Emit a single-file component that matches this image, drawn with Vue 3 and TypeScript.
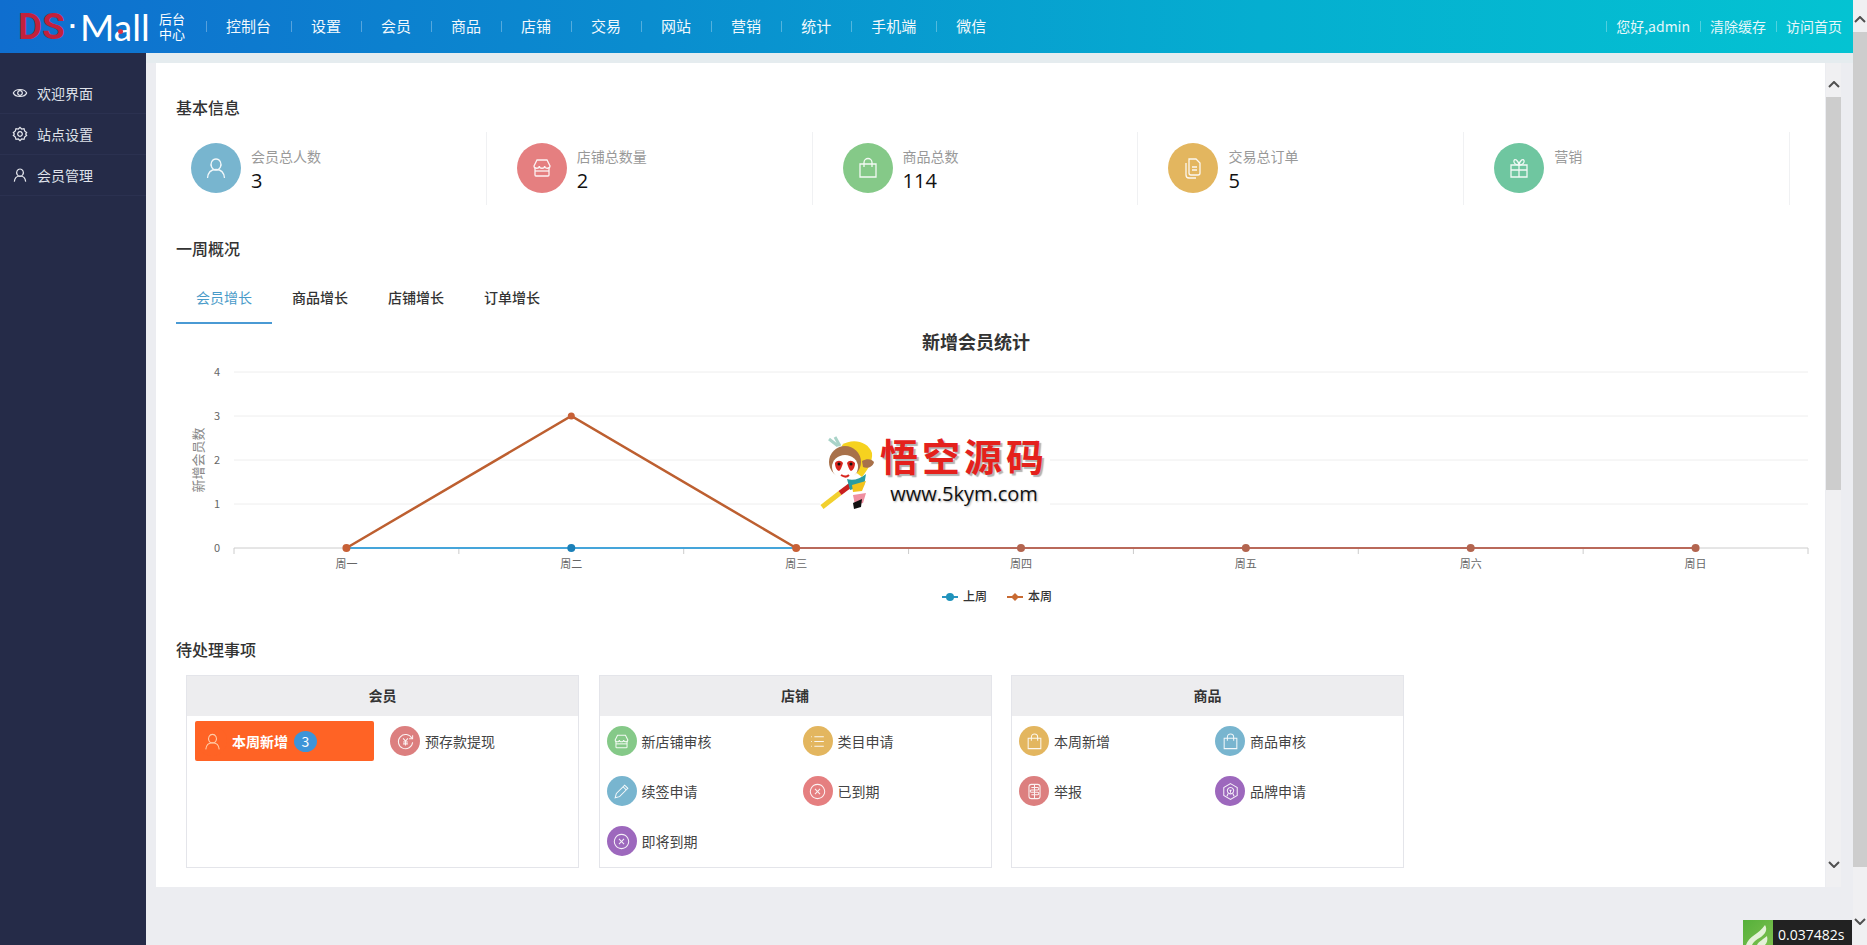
<script setup lang="ts">
interface PendingItem {
  label: string;
  icon: string;
  color: string;
  active?: boolean;
  badge?: number;
}

const icons: Record<string, string[]> = {
  user: ["M12 3a5 5.500 0 1 0 .01 0", "M3.500 22c.5-5.500 4-8.500 8.500-8.500s8 3 8.500 8.500"],
  store: [
    "M5 11v8a1 1 0 0 0 1 1h12a1 1 0 0 0 1-1v-8",
    "M4 10 7 4h10l3 6c0 3-5.300 3-5.300 0 0 3-5.400 3-5.400 0 0 3-5.300 3-5.300 0Z",
    "M5 15h14",
  ],
  bag: ["M4 8h16v13H4Z", "M8 11V6.500a4 4 0 0 1 8 0V11"],
  doc: [
    "M8 3h7l4 4v10a2 2 0 0 1-2 2h-7a2 2 0 0 1-2-2Z",
    "M5 7v12a3 3 0 0 0 3 3h7",
    "M11 11h5M11 14h5",
  ],
  gift: [
    "M4 9h16v12H4Z",
    "M12 9v12M4 14h16",
    "M12 9C9 9 6 7 7 4.500 8 2.500 11 4 12 9c1-5 4-6.500 5-4.500C18 7 15 9 12 9Z",
  ],
  list: ["M8 6h12M8 12h12M8 18h12", "M4 6h1M4 12h1M4 18h1"],
  pencil: ["M4 20l1.500-5.500L16 4l4 4L9.500 18.500Z", "M14 6l4 4"],
  xcircle: ["M12 3a9 9 0 1 0 .01 0", "M8.800 8.800l6.400 6.400M15.200 8.800l-6.400 6.400"],
  refund: [
    "M20 8a9 9 0 1 0 1 5",
    "M21 4v4.500h-4.500",
    "M9 8l3 3.500L15 8M12 11.500V17M9 12.500h6M9 15h6",
  ],
  report: [
    "M8 3h8a3 3 0 0 1 3 3v12a3 3 0 0 1-3 3H8a3 3 0 0 1-3-3V6a3 3 0 0 1 3-3Z",
    "M8 7h8a1.500 1.500 0 0 1 0 3H8a1.500 1.500 0 0 0 0 3h8a1.500 1.500 0 0 1 0 3H8",
    "M12 3v18",
  ],
  brand: [
    "M12 2l8.500 5v10L12 22l-8.500-5V7Z",
    "M12 7a4 4 0 1 0 .01 0",
    "M10.500 10.500h3M12 10.500v3M9 14.500 7.500 18M15 14.500l1.500 3.500",
  ],
  eye: ["M2 12c3-7 17-7 20 0-3 7-17 7-20 0Z", "M12 8.500a3.500 3.500 0 1 0 .01 0"],
  gear: [
    "M12 2l2.500 2.500L18 4l1 3.500 3 2.500-1.500 2 1.500 2-3 2.500-1 3.500-3.500-.5L12 22l-2.500-2.500L6 20l-1-3.500L2 14l1.500-2L2 10l3-2.500L6 4l3.500.5Z",
    "M12 8.500a3.500 3.500 0 1 0 .01 0",
  ],
};

const navItems = ["控制台", "设置", "会员", "商品", "店铺", "交易", "网站", "营销", "统计", "手机端", "微信"];
const topLinks = ["您好,admin", "清除缓存", "访问首页"];

const sideItems = [
  { label: "欢迎界面", icon: "eye" },
  { label: "站点设置", icon: "gear" },
  { label: "会员管理", icon: "user" },
];

const stats = [
  { label: "会员总人数", value: "3", icon: "user", color: "#78b5cf" },
  { label: "店铺总数量", value: "2", icon: "store", color: "#e57f80" },
  { label: "商品总数", value: "114", icon: "bag", color: "#85c988" },
  { label: "交易总订单", value: "5", icon: "doc", color: "#e3b65f" },
  { label: "营销", value: "", icon: "gift", color: "#6fc6a0" },
];

const tabs = ["会员增长", "商品增长", "店铺增长", "订单增长"];

const pending: { title: string; items: PendingItem[] }[] = [
  {
    title: "会员",
    items: [
      { label: "本周新增", icon: "user", color: "#ff6325", active: true, badge: 3 },
      { label: "预存款提现", icon: "refund", color: "#dc7f7f" },
    ],
  },
  {
    title: "店铺",
    items: [
      { label: "新店铺审核", icon: "store", color: "#85c988" },
      { label: "类目申请", icon: "list", color: "#e3b65f" },
      { label: "续签申请", icon: "pencil", color: "#78b5cf" },
      { label: "已到期", icon: "xcircle", color: "#e57f80" },
      { label: "即将到期", icon: "xcircle", color: "#9d68bd" },
    ],
  },
  {
    title: "商品",
    items: [
      { label: "本周新增", icon: "bag", color: "#e3b65f" },
      { label: "商品审核", icon: "bag", color: "#78b5cf" },
      { label: "举报", icon: "report", color: "#dc7f7f" },
      { label: "品牌申请", icon: "brand", color: "#9d68bd" },
    ],
  },
];

// chart geometry, in the svg's own coordinates
const plotLeft = 78;
const plotWidth = 1574;
const plotTop = 47;
const rowHeight = 44;
const bottom = plotTop + rowHeight * 4;
const band = plotWidth / 7;
const days = ["周一", "周二", "周三", "周四", "周五", "周六", "周日"];
const thisWeek = [0, 3, 0, 0, 0, 0, 0];

const xAt = (i: number) => plotLeft + band * i + band / 2;
const yAt = (v: number) => bottom - v * rowHeight;
const ticks = Array.from({ length: 8 }, (_, i) => plotLeft + band * i);
const points = thisWeek.map((v, i) => ({ x: xAt(i), y: yAt(v) }));
const risePath = points.slice(0, 3).map((p) => `${p.x},${p.y}`).join(" ");
</script>

<template>
  <div class="page">
    <div class="main">
      <header class="topbar">
        <div class="logo">
          <span class="logo-ds">DS</span>
          <span class="logo-dot">·</span>
          <span class="logo-mall">Mall<i class="logo-red"></i></span>
          <span class="logo-sub">后台<br />中心</span>
        </div>
        <nav class="nav">
          <a v-for="item in navItems" :key="item" class="nav-item">{{ item }}</a>
        </nav>
        <div class="top-links">
          <a v-for="link in topLinks" :key="link" class="top-link">{{ link }}</a>
        </div>
      </header>

      <div class="body">
        <aside class="sidebar">
          <div v-for="item in sideItems" :key="item.label" class="side-item">
            <svg class="side-icon" viewBox="0 0 24 24">
              <path v-for="d in icons[item.icon]" :key="d" :d="d" />
            </svg>
            <span>{{ item.label }}</span>
          </div>
        </aside>

        <section class="panel">
          <div class="card">
            <div class="content">
              <h3 class="title first">基本信息</h3>
              <div class="stats">
                <div v-for="s in stats" :key="s.label" class="stat">
                  <span class="stat-circle" :style="{ background: s.color }">
                    <svg class="stat-icon" viewBox="0 0 24 24">
                      <path v-for="d in icons[s.icon]" :key="d" :d="d" />
                    </svg>
                  </span>
                  <div class="stat-text">
                    <p class="stat-label">{{ s.label }}</p>
                    <p class="stat-value">{{ s.value }}</p>
                  </div>
                </div>
              </div>

              <h3 class="title week">一周概况</h3>
              <div class="tabs">
                <a v-for="(t, i) in tabs" :key="t" class="tab" :class="{ on: i === 0 }">{{ t }}</a>
              </div>

              <div class="chart">
                <svg class="chart-svg" width="1669" height="295" viewBox="0 0 1669 295">
                  <text class="chart-title" x="820" y="24" text-anchor="middle">新增会员统计</text>
                  <line
                    v-for="n in 4"
                    :key="n"
                    class="grid-line"
                    :x1="plotLeft"
                    :x2="plotLeft + plotWidth"
                    :y1="yAt(n)"
                    :y2="yAt(n)"
                  />
                  <text
                    v-for="n in 5"
                    :key="'y' + n"
                    class="axis-text"
                    x="64"
                    :y="yAt(n - 1) + 4"
                    text-anchor="end"
                  >{{ n - 1 }}</text>
                  <text class="axis-name" transform="translate(47 135) rotate(-90)" text-anchor="middle">新增会员数</text>

                  <line class="axis-line" :x1="plotLeft" :x2="plotLeft + plotWidth" :y1="bottom" :y2="bottom" />
                  <line
                    v-for="t in ticks"
                    :key="t"
                    class="axis-line"
                    :x1="t"
                    :x2="t"
                    :y1="bottom"
                    :y2="bottom + 6"
                  />
                  <text
                    v-for="(d, i) in days"
                    :key="d"
                    class="axis-text"
                    :x="xAt(i)"
                    :y="bottom + 20"
                    text-anchor="middle"
                  >{{ d }}</text>

                  <line class="line-flat" :x1="xAt(2)" :x2="xAt(6)" :y1="bottom" :y2="bottom" />
                  <polyline class="line-now" :points="risePath" />
                  <line class="line-last" :x1="xAt(0)" :x2="xAt(2)" :y1="bottom" :y2="bottom" />
                  <circle :cx="xAt(1)" :cy="bottom" r="4" fill="#1b80b8" />
                  <circle
                    v-for="(p, i) in points"
                    :key="i"
                    :cx="p.x"
                    :cy="p.y"
                    :r="i === 1 ? 3.5 : 4"
                    :fill="i < 3 ? '#c76036' : '#b3654f'"
                  />

                  <g class="legend">
                    <line x1="786" x2="802" y1="272" y2="272" stroke="#2a95c0" stroke-width="2" />
                    <circle cx="794" cy="272" r="4" fill="#1f93bb" />
                    <text x="807" y="276">上周</text>
                    <line x1="851" x2="867" y1="272" y2="272" stroke="#c86a32" stroke-width="2" />
                    <path d="M859 268l4 4-4 4-4-4Z" fill="#c86a32" />
                    <text x="872" y="276">本周</text>
                  </g>
                </svg>

                <div class="mark">
                  <svg class="mark-monkey" viewBox="0 0 62 76" width="62" height="76">
                    <path d="M9 4l9 7M15 2l5 9" stroke="#a9d3c8" stroke-width="3" fill="none" />
                    <path d="M2 72 20 58" stroke="#f2d02e" stroke-width="5" />
                    <path d="M20 58l12-9" stroke="#c9201e" stroke-width="5" />
                    <path d="M22 10c10-7 26-4 30 8 1 8-5 18-10 24l-16-12Z" fill="#f6d21f" />
                    <circle cx="25" cy="27" r="16" fill="#a8714a" />
                    <ellipse cx="25" cy="32" rx="13" ry="12" fill="#fff" />
                    <path d="M15 28c2-3 6-3 8 0-1 3-2 7-4 8-3-1-4-5-4-8Z" fill="#d8261f" />
                    <path d="M27 28c2-3 5-3 8 0 0 3-1 7-4 8-2-1-3-5-4-8Z" fill="#d8261f" />
                    <path d="M21 40c3 2 6 2 8 0" stroke="#d8261f" stroke-width="2" fill="none" />
                    <circle cx="19" cy="29" r="1.500" fill="#111" />
                    <circle cx="31" cy="29" r="1.500" fill="#111" />
                    <path d="M42 26c5-3 10-2 12 1-1 5-7 7-11 5Z" fill="#a8714a" />
                    <path d="M27 44c6 2 13 0 19-5l-2 12-14 4Z" fill="#2b9ca0" />
                    <path d="M32 50l14-4-4 10-9 1Z" fill="#f3c21c" />
                    <path d="M33 60l13-2-3 10-8 2Z" fill="#ef8fa0" />
                    <path d="M33 68l9-4-1 8-7 2Z" fill="#111" />
                  </svg>
                  <div class="mark-text">
                    <p class="mark-name">悟空源码</p>
                    <p class="mark-url">www.5kym.com</p>
                  </div>
                </div>
              </div>

              <h3 class="title todo">待处理事项</h3>
              <div class="pending">
                <div v-for="group in pending" :key="group.title" class="group">
                  <div class="group-head">{{ group.title }}</div>
                  <div class="group-items">
                    <div
                      v-for="item in group.items"
                      :key="item.label"
                      class="todo-item"
                      :class="{ active: item.active }"
                    >
                      <span class="todo-circle" :style="{ background: item.color }">
                        <svg class="todo-icon" viewBox="0 0 24 24">
                          <path v-for="d in icons[item.icon]" :key="d" :d="d" />
                        </svg>
                      </span>
                      <span class="todo-label">{{ item.label }}</span>
                      <span v-if="item.badge" class="todo-badge">{{ item.badge }}</span>
                    </div>
                  </div>
                </div>
              </div>
            </div>

            <div class="scroll inner">
              <div class="scroll-btn up">
                <svg width="12" height="7" viewBox="0 0 12 7"><path d="M1 6l5-5 5 5" /></svg>
              </div>
              <div class="scroll-thumb"></div>
              <div class="scroll-btn down">
                <svg width="12" height="7" viewBox="0 0 12 7"><path d="M1 1l5 5 5-5" /></svg>
              </div>
            </div>
          </div>
        </section>
      </div>
    </div>

    <div class="scroll outer">
      <div class="scroll-btn up">
        <svg width="12" height="7" viewBox="0 0 12 7"><path d="M1 6l5-5 5 5" /></svg>
      </div>
      <div class="scroll-thumb"></div>
      <div class="scroll-btn down">
        <svg width="12" height="7" viewBox="0 0 12 7"><path d="M1 1l5 5 5-5" /></svg>
      </div>
    </div>

    <div class="timer">
      <span class="timer-leaf">
        <svg width="30" height="25" viewBox="0 0 30 25">
          <path d="M3 25C6 16 16 14 22 5c3 5 0 9-4 12-5 3-8 5-9 8Z" fill="#e4f2d8" />
          <path d="M14 25c2-4 7-6 10-9 1 4 0 7-2 9Z" fill="#e4f2d8" />
        </svg>
      </span>
      <span class="timer-value">0.037482s</span>
    </div>
  </div>
</template>

<style scoped>
.page {
  position: relative;
  display: flex;
  width: 1867px;
  height: 945px;
  overflow: hidden;
  font-family: "Noto Sans CJK SC", "Liberation Sans", sans-serif;
  color: #333;
  background: #ecedf1;
}

.main {
  flex: 1;
  min-width: 0;
  display: flex;
  flex-direction: column;
}

.topbar {
  display: flex;
  align-items: center;
  height: 53px;
  flex-shrink: 0;
  background: linear-gradient(90deg, #0f6ecf, #0a8dcf 35%, #05aed0 68%, #04c3d2);
  color: #fff;
}

.logo {
  display: flex;
  align-items: center;
  width: 206px;
  height: 53px;
  flex-shrink: 0;
  padding-left: 18px;
  box-sizing: border-box;
}

.logo-ds {
  display: block;
  width: 48px;
  flex-shrink: 0;
  font: 700 37px/50px Roboto, "Liberation Sans", sans-serif;
  white-space: nowrap;
  color: #c2213c;
}

.logo-dot {
  width: 14px;
  text-align: center;
  font: bold 26px/53px "Liberation Sans", sans-serif;
}

.logo-mall {
  position: relative;
  display: block;
  width: 70px;
  font: 400 37px/50px Lato, "Open Sans", sans-serif;
  white-space: nowrap;
}

.logo-red {
  position: absolute;
  left: 38px;
  top: 27px;
  width: 5px;
  height: 5px;
  border-radius: 50%;
  background: #d8344a;
}

.logo-sub {
  margin-left: 9px;
  font-family: "Liberation Sans", "Noto Sans CJK SC", sans-serif;
  font-size: 13px;
  line-height: 15px;
}

.nav {
  display: flex;
  flex: 1;
}

.nav-item {
  position: relative;
  padding: 0 20px;
  font-size: 15px;
  line-height: 50px;
  height: 51px;
  color: #f1f8fc;
  white-space: nowrap;
}

.nav-item::before,
.top-link::before {
  content: "";
  position: absolute;
  left: 0;
  top: 20px;
  width: 1px;
  height: 11px;
  background: rgba(255, 255, 255, 0.3);
}

.top-links {
  display: flex;
  padding-right: 11px;
}

.top-link {
  position: relative;
  padding: 0 10px;
  font-size: 14px;
  line-height: 50px;
  height: 51px;
  color: #e6f7fa;
  white-space: nowrap;
}

.top-link:last-child {
  padding-right: 0;
}

.body {
  flex: 1;
  display: flex;
  min-height: 0;
}

.sidebar {
  width: 146px;
  flex-shrink: 0;
  padding-top: 20px;
  box-sizing: border-box;
  background: #252b48;
}

.side-item {
  display: flex;
  align-items: center;
  gap: 9px;
  height: 40px;
  padding-left: 12px;
  border-bottom: 1px solid #2b3150;
  font-size: 14px;
  color: #dfe2ea;
}

.side-icon {
  width: 16px;
  height: 16px;
  fill: none;
  stroke: #e6e8ee;
  stroke-width: 1.800;
}

.panel {
  flex: 1;
  min-width: 0;
  padding: 10px 12px 58px 10px;
  background: linear-gradient(#e5ecef 10px, #ecedf1 10px);
}

.card {
  display: flex;
  height: 100%;
}

.content {
  flex: 1;
  min-width: 0;
  overflow: hidden;
  background: #fff;
}

.title {
  margin: 0 0 0 20px;
  font-size: 16px;
  line-height: 22px;
  font-weight: 500;
  color: #333;
}

.title.first {
  margin-top: 33px;
}

.title.week {
  margin-top: 32px;
}

.title.todo {
  margin-top: 18px;
}

.stats {
  display: flex;
  margin: 14px 0 0 5px;
}

.stat {
  display: flex;
  width: 325.800px;
  height: 73px;
  flex-shrink: 0;
  box-sizing: border-box;
  padding: 11px 0 0 30px;
  border-right: 1px solid #f0f1f3;
}

.stat-circle {
  display: flex;
  align-items: center;
  justify-content: center;
  width: 50px;
  height: 50px;
  border-radius: 50%;
  flex-shrink: 0;
}

.stat-icon {
  width: 24px;
  height: 24px;
  fill: none;
  stroke: #fff;
  stroke-width: 1.300;
  opacity: 0.9;
}

.stat-text {
  margin-left: 10px;
}

.stat-label {
  margin: 0;
  font-size: 14px;
  line-height: 20px;
  margin-top: 3px;
  color: #999;
}

.stat-value {
  margin: 2px 0 0;
  font: 20px/26px "Open Sans", sans-serif;
  color: #111;
}

.tabs {
  display: flex;
  margin: 14px 0 0 20px;
}

.tab {
  width: 96px;
  height: 49px;
  padding-bottom: 2px;
  text-align: center;
  font-size: 14px;
  line-height: 49px;
  font-weight: 500;
  color: #333;
}

.tab.on {
  font-weight: 400;
  color: #4a9bc9;
  border-bottom: 2px solid #4a9ad4;
  padding-bottom: 0;
}

.chart {
  position: relative;
  height: 295px;
  margin-top: 1px;
}

.chart-svg {
  display: block;
}

.chart-title {
  font-size: 18px;
  font-weight: 700;
  fill: #333;
}

.grid-line {
  stroke: #eeeeee;
  stroke-width: 1;
}

.axis-line {
  stroke: #cccccc;
  stroke-width: 1;
}

.axis-text {
  font-size: 11px;
  fill: #666;
}

.axis-name {
  font-size: 13px;
  fill: #888;
}

.line-now {
  fill: none;
  stroke: #bd5f30;
  stroke-width: 2.500;
}

.line-flat {
  stroke: #b9695a;
  stroke-width: 2;
}

.line-last {
  stroke: #45a5da;
  stroke-width: 2;
}

.legend text {
  font-size: 12px;
  font-weight: 500;
  fill: #333;
}

.mark {
  position: absolute;
  left: 664px;
  top: 106px;
  display: flex;
  width: 230px;
  height: 80px;
  background: #fff;
}

.mark-monkey {
  flex-shrink: 0;
  margin-top: 4px;
}

.mark-text {
  margin: 5px 0 0 -2px;
  text-align: center;
}

.mark-name {
  margin: 0;
  font-family: "Liberation Sans", "Noto Sans CJK SC", sans-serif;
  font-size: 38px;
  line-height: 44px;
  font-weight: 700;
  letter-spacing: 4px;
  white-space: nowrap;
  color: #e4211c;
  text-shadow: 2px 2px 1px rgba(0, 0, 0, 0.3);
}

.mark-url {
  margin: 0;
  font: 20px/27px "Open Sans", sans-serif;
  color: #111;
  text-shadow: 1px 1px 2px rgba(0, 0, 0, 0.3);
  white-space: nowrap;
}

.pending {
  display: flex;
  gap: 19.500px;
  margin: 15px 0 0 30px;
}

.group {
  width: 393px;
  height: 193px;
  box-sizing: border-box;
  border: 1px solid #e4e5ea;
}

.group-head {
  height: 40px;
  background: #ededef;
  text-align: center;
  font-size: 14px;
  line-height: 39px;
  font-weight: 700;
  color: #333;
}

.group-items {
  display: grid;
  grid-template-columns: 196px 180px;
  grid-auto-rows: 40px;
  row-gap: 10px;
  padding: 5px 0 0 7px;
}

.todo-item {
  display: flex;
  align-items: center;
  font-size: 14px;
  color: #444;
}

.todo-circle {
  display: flex;
  align-items: center;
  justify-content: center;
  width: 30px;
  height: 30px;
  border-radius: 50%;
  flex-shrink: 0;
}

.todo-icon {
  width: 19px;
  height: 19px;
  fill: none;
  stroke: #fff;
  stroke-width: 1.300;
  opacity: 0.9;
}

.todo-label {
  margin-left: 5px;
}

.todo-item.active {
  width: 179px;
  margin-left: 1px;
  border-radius: 2px;
  background: #ff6325;
  color: #fff;
}

.todo-item.active .todo-circle {
  margin-left: 2px;
}

.todo-item.active .todo-icon {
  stroke: #ffd9b8;
}

.todo-item.active .todo-label {
  font-weight: 700;
}

.todo-badge {
  display: flex;
  align-items: center;
  justify-content: center;
  width: 23px;
  height: 21px;
  margin-left: 6px;
  border-radius: 50%;
  background: #3d94d8;
  font-size: 14px;
  color: #fff;
}

.scroll {
  display: flex;
  flex-direction: column;
  flex-shrink: 0;
  width: 15px;
  background: #f0f0f2;
}

.scroll-btn {
  flex-shrink: 0;
  display: flex;
  justify-content: center;
}

.scroll-btn path {
  fill: none;
  stroke: #505050;
  stroke-width: 2;
}

.scroll-thumb {
  background: #cdcdcd;
}

.scroll.inner {
  margin-left: 1px;
}

.inner .scroll-btn {
  height: 34px;
}

.inner .scroll-btn.up {
  padding-top: 18px;
  box-sizing: border-box;
}

.inner .scroll-btn.down {
  margin-top: auto;
  padding-top: 8px;
  box-sizing: border-box;
}

.inner .scroll-thumb {
  height: 393px;
}

.outer {
  width: 14px;
}

.outer .scroll-btn {
  height: 32px;
}

.outer .scroll-btn.up {
  padding-top: 16px;
  box-sizing: border-box;
}

.outer .scroll-btn.down {
  margin-top: auto;
  height: 27px;
}

.outer .scroll-thumb {
  height: 835px;
}

.timer {
  position: absolute;
  right: 15px;
  bottom: 0;
  display: flex;
  height: 25px;
}

.timer-leaf {
  display: block;
  width: 30px;
  height: 25px;
  background: linear-gradient(135deg, #55b03a, #7cc04f);
}

.timer-leaf svg {
  display: block;
}

.timer-value {
  width: 79px;
  padding-left: 5px;
  box-sizing: border-box;
  background: #222;
  font: 14px/29px "Open Sans", sans-serif;
  color: #fff;
}
</style>

<style>
html,
body {
  margin: 0;
  overflow: hidden;
}
</style>
